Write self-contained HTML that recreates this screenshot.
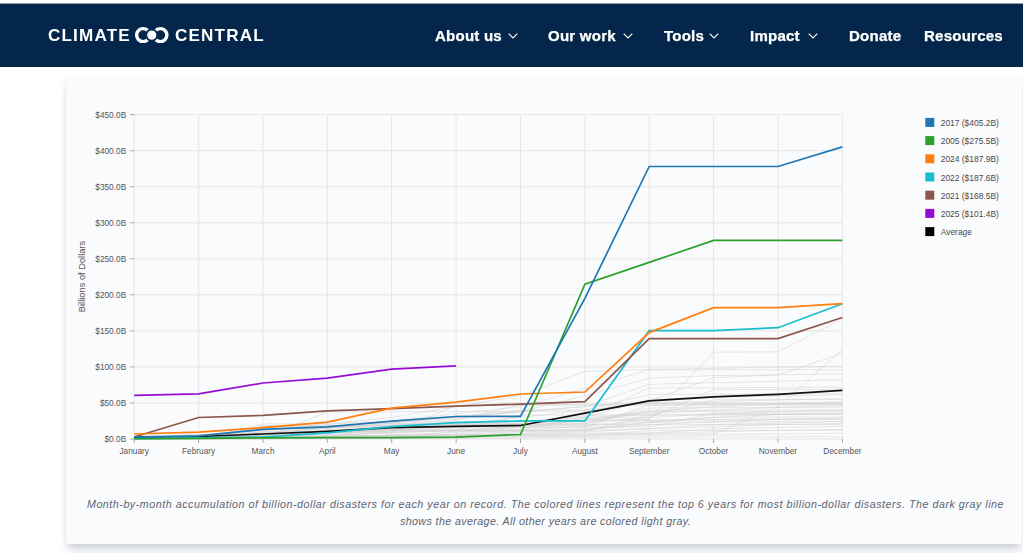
<!DOCTYPE html>
<html><head><meta charset="utf-8"><style>
*{margin:0;padding:0;box-sizing:border-box}
html,body{width:1023px;height:553px;overflow:hidden;background:#fff;font-family:"Liberation Sans",sans-serif}
.nav{position:absolute;left:0;top:4px;width:1023px;height:63px;background:#03264a}
.logo{position:absolute;top:29px;color:#fff;font-weight:bold;font-size:16.3px;letter-spacing:1.1px;line-height:12px;white-space:nowrap;transform:scaleX(1.05);transform-origin:0 0}
.ni{position:absolute;top:28.5px;color:#fff;font-weight:bold;font-size:14px;line-height:14px;letter-spacing:0.2px;transform:scaleX(1.075);transform-origin:0 0;-webkit-text-stroke:0.25px #fff;white-space:nowrap}
.chev{position:absolute;top:33px;width:10px;height:6px}
.card{position:absolute;left:66px;top:77px;width:956px;height:467px;background:#fafbfd;border-radius:3px;box-shadow:0 8px 10px -2px rgba(30,50,80,0.2),0 0 5px rgba(30,50,80,0.07)}
.tl{font-size:8.3px;fill:#555;font-family:"Liberation Sans",sans-serif}
.yl{font-size:9.3px;fill:#555;font-family:"Liberation Sans",sans-serif}
.lg{font-size:8.45px;fill:#4a4a4a;font-family:"Liberation Sans",sans-serif}
.cap{position:absolute;left:67px;width:957px;text-align:center;font-style:italic;font-size:10.7px;color:#5a6472;letter-spacing:0.53px;line-height:17px}
</style></head><body>
<div class="nav">
</div>
<div style="position:absolute;left:0;top:3px;width:1023px;height:1px;background:rgba(3,38,74,0.45)"></div>
<div class="logo" style="left:47.5px">CLIMATE</div>
<svg style="position:absolute;left:130px;top:24px" width="42" height="22" viewBox="0 0 42 22">
 <defs><mask id="lm"><rect x="0" y="0" width="42" height="22" fill="#fff"/><circle cx="21.7" cy="11.1" r="6.5" fill="#000"/></mask>
 <radialGradient id="dg" cx="0.65" cy="0.45" r="0.7"><stop offset="0.55" stop-color="#fff"/><stop offset="1" stop-color="#d8d8d8"/></radialGradient></defs>
 <g mask="url(#lm)">
 <circle cx="13.1" cy="11.1" r="6.5" stroke="#fff" stroke-width="3.4" fill="none"/>
 <circle cx="30.4" cy="11.1" r="6.5" stroke="#fff" stroke-width="3.4" fill="none"/>
 </g>
 <circle cx="21.7" cy="11.1" r="4.65" fill="url(#dg)"/>
</svg>
<div class="logo" style="left:175px">CENTRAL</div>
<div class="ni" style="left:434.5px">About us</div>
<div class="ni" style="left:547.5px">Our work</div>
<div class="ni" style="left:664px">Tools</div>
<div class="ni" style="left:749.5px">Impact</div>
<div class="ni" style="left:848.5px">Donate</div>
<div class="ni" style="left:924px">Resources</div>
<svg class="chev" style="left:507.5px" viewBox="0 0 10 6"><path d="M0.7,0.7 L5,5 L9.3,0.7" stroke="#fff" stroke-width="1.1" fill="none"/></svg>
<svg class="chev" style="left:623.1px" viewBox="0 0 10 6"><path d="M0.7,0.7 L5,5 L9.3,0.7" stroke="#fff" stroke-width="1.1" fill="none"/></svg>
<svg class="chev" style="left:709.4px" viewBox="0 0 10 6"><path d="M0.7,0.7 L5,5 L9.3,0.7" stroke="#fff" stroke-width="1.1" fill="none"/></svg>
<svg class="chev" style="left:807.9px" viewBox="0 0 10 6"><path d="M0.7,0.7 L5,5 L9.3,0.7" stroke="#fff" stroke-width="1.1" fill="none"/></svg>

<div class="card"></div>
<svg width="1023" height="553" viewBox="0 0 1023 553" style="position:absolute;left:0;top:0">
<path d="M134.2,439.0 H842.4 M134.2,403.0 H842.4 M134.2,366.9 H842.4 M134.2,330.9 H842.4 M134.2,294.8 H842.4 M134.2,258.8 H842.4 M134.2,222.8 H842.4 M134.2,186.7 H842.4 M134.2,150.7 H842.4 M134.2,114.6 H842.4 M134.2,114.6 V439.0 M198.6,114.6 V439.0 M263.0,114.6 V439.0 M327.3,114.6 V439.0 M391.7,114.6 V439.0 M456.1,114.6 V439.0 M520.5,114.6 V439.0 M584.9,114.6 V439.0 M649.2,114.6 V439.0 M713.6,114.6 V439.0 M778.0,114.6 V439.0 M842.4,114.6 V439.0" stroke="#e6e6e6" stroke-width="1" fill="none"/>
<path d="M130.2,439.0 H134.2 M130.2,403.0 H134.2 M130.2,366.9 H134.2 M130.2,330.9 H134.2 M130.2,294.8 H134.2 M130.2,258.8 H134.2 M130.2,222.8 H134.2 M130.2,186.7 H134.2 M130.2,150.7 H134.2 M130.2,114.6 H134.2 M134.2,439.0 V443.0 M198.6,439.0 V443.0 M263.0,439.0 V443.0 M327.3,439.0 V443.0 M391.7,439.0 V443.0 M456.1,439.0 V443.0 M520.5,439.0 V443.0 M584.9,439.0 V443.0 M649.2,439.0 V443.0 M713.6,439.0 V443.0 M778.0,439.0 V443.0 M842.4,439.0 V443.0" stroke="#a3a3a3" stroke-width="1" fill="none"/>
<text x="126.2" y="442.2" text-anchor="end" class="tl">$0.0B</text>
<text x="126.2" y="406.2" text-anchor="end" class="tl">$50.0B</text>
<text x="126.2" y="370.1" text-anchor="end" class="tl">$100.0B</text>
<text x="126.2" y="334.1" text-anchor="end" class="tl">$150.0B</text>
<text x="126.2" y="298.0" text-anchor="end" class="tl">$200.0B</text>
<text x="126.2" y="262.0" text-anchor="end" class="tl">$250.0B</text>
<text x="126.2" y="226.0" text-anchor="end" class="tl">$300.0B</text>
<text x="126.2" y="189.9" text-anchor="end" class="tl">$350.0B</text>
<text x="126.2" y="153.9" text-anchor="end" class="tl">$400.0B</text>
<text x="126.2" y="117.8" text-anchor="end" class="tl">$450.0B</text>
<text x="134.2" y="453.6" text-anchor="middle" class="tl">January</text>
<text x="198.6" y="453.6" text-anchor="middle" class="tl">February</text>
<text x="263.0" y="453.6" text-anchor="middle" class="tl">March</text>
<text x="327.3" y="453.6" text-anchor="middle" class="tl">April</text>
<text x="391.7" y="453.6" text-anchor="middle" class="tl">May</text>
<text x="456.1" y="453.6" text-anchor="middle" class="tl">June</text>
<text x="520.5" y="453.6" text-anchor="middle" class="tl">July</text>
<text x="584.9" y="453.6" text-anchor="middle" class="tl">August</text>
<text x="649.2" y="453.6" text-anchor="middle" class="tl">September</text>
<text x="713.6" y="453.6" text-anchor="middle" class="tl">October</text>
<text x="778.0" y="453.6" text-anchor="middle" class="tl">November</text>
<text x="842.4" y="453.6" text-anchor="middle" class="tl">December</text>
<text transform="translate(84.8,276.5) rotate(-90)" text-anchor="middle" class="yl">Billions of Dollars</text>
<path d="M134.2,437.6 L198.6,436.1 L263.0,434.7 L327.3,431.8 L391.7,428.9 L456.1,426.0 L520.5,423.1 L584.9,420.3 L649.2,419.5 L713.6,352.2 L778.0,351.8 L842.4,319.3" stroke="#d0d0d0" stroke-opacity="0.5" stroke-width="1" fill="none"/>
<path d="M134.2,438.3 L198.6,437.6 L263.0,436.8 L327.3,436.1 L391.7,435.4 L456.1,434.7 L520.5,434.7 L584.9,434.0 L649.2,434.0 L713.6,434.0 L778.0,406.6 L842.4,349.4" stroke="#d0d0d0" stroke-opacity="0.5" stroke-width="1" fill="none"/>
<path d="M134.2,437.6 L198.6,436.1 L263.0,433.2 L327.3,428.2 L391.7,423.1 L456.1,417.4 L520.5,411.6 L584.9,406.6 L649.2,400.9 L713.6,377.7 L778.0,375.0 L842.4,353.2" stroke="#d0d0d0" stroke-opacity="0.5" stroke-width="1" fill="none"/>
<path d="M134.2,436.8 L198.6,434.7 L263.0,430.4 L327.3,424.6 L391.7,417.4 L456.1,406.6 L520.5,395.8 L584.9,371.4 L649.2,369.5 L713.6,368.4 L778.0,366.9 L842.4,366.4" stroke="#d0d0d0" stroke-opacity="0.5" stroke-width="1" fill="none"/>
<path d="M134.2,437.6 L198.6,436.1 L263.0,433.2 L327.3,428.2 L391.7,421.0 L456.1,413.8 L520.5,406.6 L584.9,388.5 L649.2,369.8 L713.6,369.8 L778.0,369.8 L842.4,369.8" stroke="#d0d0d0" stroke-opacity="0.5" stroke-width="1" fill="none"/>
<path d="M134.2,438.3 L198.6,436.8 L263.0,434.7 L327.3,431.8 L391.7,426.0 L456.1,418.8 L520.5,411.6 L584.9,395.8 L649.2,378.2 L713.6,375.6 L778.0,374.8 L842.4,374.0" stroke="#d0d0d0" stroke-opacity="0.5" stroke-width="1" fill="none"/>
<path d="M134.2,436.1 L198.6,434.7 L263.0,431.8 L327.3,428.2 L391.7,423.1 L456.1,417.4 L520.5,411.6 L584.9,406.6 L649.2,384.3 L713.6,382.8 L778.0,381.3 L842.4,379.6" stroke="#d0d0d0" stroke-opacity="0.5" stroke-width="1" fill="none"/>
<path d="M134.2,438.3 L198.6,437.6 L263.0,436.1 L327.3,433.2 L391.7,430.4 L456.1,426.0 L520.5,421.7 L584.9,417.4 L649.2,399.4 L713.6,397.2 L778.0,395.8 L842.4,394.9" stroke="#d0d0d0" stroke-opacity="0.5" stroke-width="1" fill="none"/>
<path d="M134.2,436.8 L198.6,435.4 L263.0,433.2 L327.3,430.4 L391.7,427.5 L456.1,424.6 L520.5,417.4 L584.9,410.2 L649.2,402.7 L713.6,401.5 L778.0,400.1 L842.4,398.4" stroke="#d0d0d0" stroke-opacity="0.5" stroke-width="1" fill="none"/>
<path d="M134.2,437.6 L198.6,436.8 L263.0,435.4 L327.3,433.2 L391.7,430.4 L456.1,427.5 L520.5,424.6 L584.9,418.8 L649.2,411.6 L713.6,406.6 L778.0,404.4 L842.4,401.9" stroke="#d0d0d0" stroke-opacity="0.5" stroke-width="1" fill="none"/>
<path d="M134.2,438.3 L198.6,437.6 L263.0,436.8 L327.3,435.4 L391.7,433.2 L456.1,430.4 L520.5,426.0 L584.9,421.0 L649.2,412.9 L713.6,410.2 L778.0,407.3 L842.4,405.4" stroke="#d0d0d0" stroke-opacity="0.5" stroke-width="1" fill="none"/>
<path d="M134.2,437.6 L198.6,436.8 L263.0,436.1 L327.3,434.7 L391.7,432.5 L456.1,430.4 L520.5,427.5 L584.9,423.1 L649.2,417.5 L713.6,413.8 L778.0,411.6 L842.4,410.2" stroke="#d0d0d0" stroke-opacity="0.5" stroke-width="1" fill="none"/>
<path d="M134.2,438.3 L198.6,437.6 L263.0,436.8 L327.3,436.1 L391.7,434.7 L456.1,432.5 L520.5,430.4 L584.9,426.0 L649.2,422.0 L713.6,417.4 L778.0,414.5 L842.4,413.0" stroke="#d0d0d0" stroke-opacity="0.5" stroke-width="1" fill="none"/>
<path d="M134.2,438.3 L198.6,437.6 L263.0,436.8 L327.3,436.1 L391.7,435.4 L456.1,434.0 L520.5,431.8 L584.9,428.9 L649.2,424.9 L713.6,421.7 L778.0,419.5 L842.4,417.9" stroke="#d0d0d0" stroke-opacity="0.5" stroke-width="1" fill="none"/>
<path d="M134.2,438.6 L198.6,438.3 L263.0,437.6 L327.3,436.8 L391.7,436.1 L456.1,434.7 L520.5,433.2 L584.9,430.4 L649.2,428.6 L713.6,424.6 L778.0,423.1 L842.4,421.4" stroke="#d0d0d0" stroke-opacity="0.5" stroke-width="1" fill="none"/>
<path d="M134.2,438.6 L198.6,438.3 L263.0,437.6 L327.3,436.8 L391.7,436.1 L456.1,435.4 L520.5,434.0 L584.9,431.8 L649.2,428.9 L713.6,426.7 L778.0,424.6 L842.4,423.5" stroke="#d0d0d0" stroke-opacity="0.5" stroke-width="1" fill="none"/>
<path d="M134.2,438.6 L198.6,438.3 L263.0,437.9 L327.3,437.6 L391.7,436.8 L456.1,436.1 L520.5,434.7 L584.9,433.2 L649.2,433.2 L713.6,428.9 L778.0,427.5 L842.4,426.3" stroke="#d0d0d0" stroke-opacity="0.5" stroke-width="1" fill="none"/>
<path d="M134.2,438.8 L198.6,438.6 L263.0,438.3 L327.3,437.9 L391.7,437.6 L456.1,436.8 L520.5,436.1 L584.9,436.0 L649.2,433.2 L713.6,431.8 L778.0,430.4 L842.4,429.7" stroke="#d0d0d0" stroke-opacity="0.5" stroke-width="1" fill="none"/>
<path d="M134.2,438.9 L198.6,438.7 L263.0,438.6 L327.3,438.3 L391.7,437.9 L456.1,437.6 L520.5,436.8 L584.9,436.1 L649.2,435.4 L713.6,434.7 L778.0,434.0 L842.4,433.2" stroke="#d0d0d0" stroke-opacity="0.5" stroke-width="1" fill="none"/>
<path d="M134.2,438.9 L198.6,438.9 L263.0,438.8 L327.3,438.6 L391.7,438.4 L456.1,438.3 L520.5,437.9 L584.9,437.6 L649.2,437.2 L713.6,436.8 L778.0,436.8 L842.4,436.7" stroke="#d0d0d0" stroke-opacity="0.5" stroke-width="1" fill="none"/>
<path d="M134.2,438.8 L198.6,438.6 L263.0,428.1 L327.3,427.9 L391.7,427.7 L456.1,427.5 L520.5,427.4 L584.9,427.2 L649.2,426.9 L713.6,413.4 L778.0,413.4 L842.4,413.3" stroke="#d0d0d0" stroke-opacity="0.5" stroke-width="1" fill="none"/>
<path d="M134.2,438.8 L198.6,438.6 L263.0,438.3 L327.3,430.0 L391.7,429.7 L456.1,420.4 L520.5,404.5 L584.9,404.4 L649.2,404.1 L713.6,403.8 L778.0,403.5 L842.4,403.3" stroke="#d0d0d0" stroke-opacity="0.5" stroke-width="1" fill="none"/>
<path d="M134.2,438.8 L198.6,438.4 L263.0,425.6 L327.3,425.5 L391.7,425.1 L456.1,424.9 L520.5,424.9 L584.9,424.7 L649.2,424.6 L713.6,424.6 L778.0,424.5 L842.4,424.4" stroke="#d0d0d0" stroke-opacity="0.5" stroke-width="1" fill="none"/>
<path d="M134.2,438.6 L198.6,438.4 L263.0,436.1 L327.3,435.8 L391.7,435.5 L456.1,435.3 L520.5,435.3 L584.9,435.2 L649.2,430.7 L713.6,430.4 L778.0,430.4 L842.4,430.3" stroke="#d0d0d0" stroke-opacity="0.5" stroke-width="1" fill="none"/>
<path d="M134.2,438.8 L198.6,438.6 L263.0,434.0 L327.3,431.6 L391.7,431.6 L456.1,431.3 L520.5,431.3 L584.9,431.1 L649.2,415.2 L713.6,415.1 L778.0,414.6 L842.4,414.3" stroke="#d0d0d0" stroke-opacity="0.5" stroke-width="1" fill="none"/>
<path d="M134.2,438.9 L198.6,438.7 L263.0,438.7 L327.3,438.5 L391.7,424.2 L456.1,424.0 L520.5,424.0 L584.9,423.9 L649.2,410.2 L713.6,410.2 L778.0,410.0 L842.4,409.7" stroke="#d0d0d0" stroke-opacity="0.5" stroke-width="1" fill="none"/>
<path d="M134.2,438.9 L198.6,438.9 L263.0,426.7 L327.3,426.3 L391.7,426.2 L456.1,426.1 L520.5,421.0 L584.9,420.5 L649.2,420.5 L713.6,420.1 L778.0,419.7 L842.4,419.4" stroke="#d0d0d0" stroke-opacity="0.5" stroke-width="1" fill="none"/>
<path d="M134.2,438.7 L198.6,438.6 L263.0,438.2 L327.3,432.6 L391.7,432.5 L456.1,405.5 L520.5,405.2 L584.9,405.2 L649.2,405.1 L713.6,404.9 L778.0,404.5 L842.4,404.2" stroke="#d0d0d0" stroke-opacity="0.5" stroke-width="1" fill="none"/>
<path d="M134.2,438.8 L198.6,438.8 L263.0,423.9 L327.3,423.8 L391.7,423.5 L456.1,423.5 L520.5,423.3 L584.9,422.9 L649.2,408.0 L713.6,407.7 L778.0,407.4 L842.4,407.1" stroke="#d0d0d0" stroke-opacity="0.5" stroke-width="1" fill="none"/>
<path d="M134.2,438.7 L198.6,438.3 L263.0,438.3 L327.3,438.0 L391.7,424.9 L456.1,424.6 L520.5,424.5 L584.9,417.5 L649.2,388.0 L713.6,387.8 L778.0,387.4 L842.4,387.1" stroke="#d0d0d0" stroke-opacity="0.5" stroke-width="1" fill="none"/>
<path d="M134.2,439.0 L198.6,438.8 L263.0,438.8 L327.3,430.1 L391.7,429.9 L456.1,429.9 L520.5,429.9 L584.9,429.9 L649.2,422.0 L713.6,417.4 L778.0,417.2 L842.4,417.1" stroke="#d0d0d0" stroke-opacity="0.5" stroke-width="1" fill="none"/>
<path d="M134.2,438.9 L198.6,438.6 L263.0,438.4 L327.3,438.1 L391.7,437.7 L456.1,431.5 L520.5,427.1 L584.9,427.0 L649.2,405.1 L713.6,405.0 L778.0,404.9 L842.4,404.5" stroke="#d0d0d0" stroke-opacity="0.5" stroke-width="1" fill="none"/>
<path d="M134.2,438.7 L198.6,438.6 L263.0,438.5 L327.3,430.5 L391.7,430.1 L456.1,430.0 L520.5,415.1 L584.9,415.0 L649.2,414.6 L713.6,414.6 L778.0,414.5 L842.4,414.1" stroke="#d0d0d0" stroke-opacity="0.5" stroke-width="1" fill="none"/>
<path d="M134.2,438.6 L198.6,438.5 L263.0,427.6 L327.3,427.3 L391.7,427.0 L456.1,426.6 L520.5,426.3 L584.9,420.3 L649.2,411.9 L713.6,411.8 L778.0,411.6 L842.4,411.3" stroke="#d0d0d0" stroke-opacity="0.5" stroke-width="1" fill="none"/>
<path d="M134.2,439.0 L198.6,438.6 L263.0,426.2 L327.3,426.1 L391.7,426.1 L456.1,425.8 L520.5,425.7 L584.9,425.4 L649.2,420.0 L713.6,419.6 L778.0,419.2 L842.4,418.9" stroke="#d0d0d0" stroke-opacity="0.5" stroke-width="1" fill="none"/>
<path d="M134.2,438.8 L198.6,438.8 L263.0,431.8 L327.3,431.4 L391.7,431.2 L456.1,430.8 L520.5,430.6 L584.9,430.2 L649.2,422.5 L713.6,422.1 L778.0,421.8 L842.4,421.7" stroke="#d0d0d0" stroke-opacity="0.5" stroke-width="1" fill="none"/>
<path d="M134.2,438.8 L198.6,438.4 L263.0,438.0 L327.3,422.1 L391.7,421.9 L456.1,421.6 L520.5,421.5 L584.9,416.0 L649.2,415.6 L713.6,399.8 L778.0,399.5 L842.4,399.4" stroke="#d0d0d0" stroke-opacity="0.5" stroke-width="1" fill="none"/>
<path d="M134.2,438.7 L198.6,438.7 L263.0,438.5 L327.3,438.4 L391.7,430.1 L456.1,429.9 L520.5,429.8 L584.9,418.0 L649.2,417.9 L713.6,389.6 L778.0,389.4 L842.4,389.4" stroke="#d0d0d0" stroke-opacity="0.5" stroke-width="1" fill="none"/>
<path d="M134.2,438.7 L198.6,438.3 L263.0,438.1 L327.3,437.7 L391.7,422.2 L456.1,416.3 L520.5,410.1 L584.9,410.0 L649.2,394.5 L713.6,394.2 L778.0,394.0 L842.4,393.6" stroke="#d0d0d0" stroke-opacity="0.5" stroke-width="1" fill="none"/>
<path d="M134.2,438.8 L198.6,438.5 L263.0,438.4 L327.3,411.9 L391.7,411.7 L456.1,411.5 L520.5,411.5 L584.9,411.0 L649.2,403.4 L713.6,403.2 L778.0,402.9 L842.4,402.6" stroke="#d0d0d0" stroke-opacity="0.5" stroke-width="1" fill="none"/>
<path d="M134.2,437.2 L198.6,436.5 L263.0,434.0 L327.3,431.4 L391.7,427.7 L456.1,426.4 L520.5,425.5 L584.9,413.2 L649.2,400.9 L713.6,396.9 L778.0,394.3 L842.4,390.4" stroke="#111" stroke-width="1.7" fill="none"/>
<path d="M134.2,438.6 L198.6,437.9 L263.0,437.0 L327.3,432.9 L391.7,426.7 L456.1,422.6 L520.5,420.9 L584.9,420.9 L649.2,330.7 L713.6,330.7 L778.0,327.7 L842.4,303.8" stroke="#17becf" stroke-width="1.7" fill="none"/>
<path d="M134.2,437.0 L198.6,417.5 L263.0,415.4 L327.3,410.9 L391.7,408.7 L456.1,406.2 L520.5,404.1 L584.9,401.6 L649.2,338.6 L713.6,338.6 L778.0,338.6 L842.4,317.5" stroke="#8c564b" stroke-width="1.7" fill="none"/>
<path d="M134.2,434.0 L198.6,432.1 L263.0,427.7 L327.3,422.2 L391.7,408.2 L456.1,402.1 L520.5,394.0 L584.9,392.0 L649.2,332.6 L713.6,307.7 L778.0,307.7 L842.4,303.6" stroke="#ff7f0e" stroke-width="1.7" fill="none"/>
<path d="M134.2,438.6 L198.6,438.3 L263.0,437.9 L327.3,437.6 L391.7,437.6 L456.1,437.2 L520.5,434.5 L584.9,284.2 L649.2,262.4 L713.6,240.4 L778.0,240.4 L842.4,240.4" stroke="#2ca02c" stroke-width="1.7" fill="none"/>
<path d="M134.2,437.2 L198.6,435.8 L263.0,429.4 L327.3,426.9 L391.7,421.2 L456.1,416.5 L520.5,416.4 L584.9,298.4 L649.2,166.5 L713.6,166.5 L778.0,166.5 L842.4,146.9" stroke="#1f77b4" stroke-width="1.7" fill="none"/>
<path d="M134.2,395.4 L198.6,393.9 L263.0,383.0 L327.3,378.1 L391.7,369.2 L456.1,365.9" stroke="#970cd4" stroke-width="1.7" fill="none"/>
<rect x="925.3" y="117.9" width="9" height="9" fill="#1f77b4"/>
<text x="940.7" y="125.9" class="lg">2017 ($405.2B)</text>
<rect x="925.3" y="136.1" width="9" height="9" fill="#2ca02c"/>
<text x="940.7" y="144.1" class="lg">2005 ($275.5B)</text>
<rect x="925.3" y="154.3" width="9" height="9" fill="#ff7f0e"/>
<text x="940.7" y="162.3" class="lg">2024 ($187.9B)</text>
<rect x="925.3" y="172.5" width="9" height="9" fill="#17becf"/>
<text x="940.7" y="180.5" class="lg">2022 ($187.6B)</text>
<rect x="925.3" y="190.7" width="9" height="9" fill="#8c564b"/>
<text x="940.7" y="198.7" class="lg">2021 ($168.5B)</text>
<rect x="925.3" y="208.9" width="9" height="9" fill="#970cd4"/>
<text x="940.7" y="216.9" class="lg">2025 ($101.4B)</text>
<rect x="925.3" y="227.1" width="9" height="9" fill="#000"/>
<text x="940.7" y="235.1" class="lg">Average</text>
</svg>
<div class="cap" style="top:495.5px">Month-by-month accumulation of billion-dollar disasters for each year on record. The colored lines represent the top 6 years for most billion-dollar disasters. The dark gray line</div>
<div class="cap" style="top:512.5px;letter-spacing:0.39px">shows the average. All other years are colored light gray.</div>
</body></html>
